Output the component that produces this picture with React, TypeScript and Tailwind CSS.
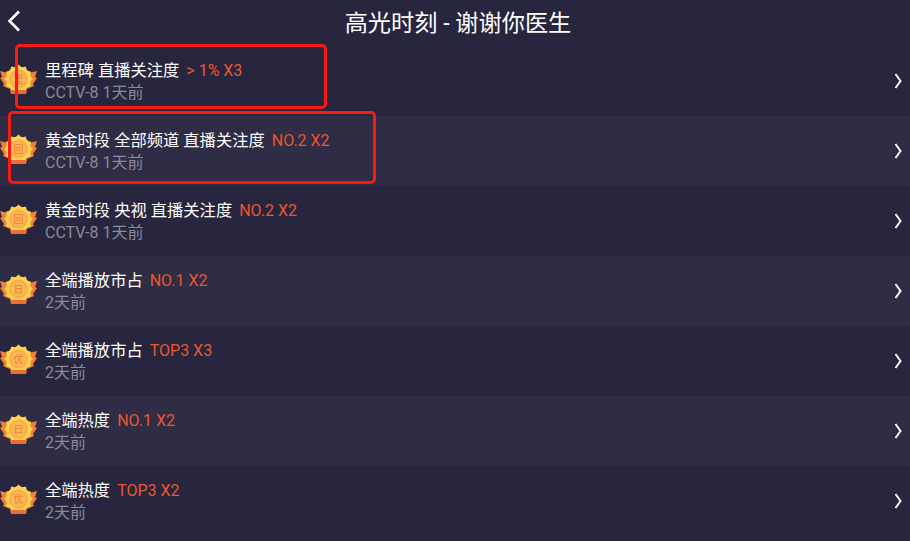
type Item = { title: string; tag: string; sub: string; glyph: string };

const items: Item[] = [
  { title: "里程碑 直播关注度", tag: "> 1% X3", sub: "CCTV-8 1天前", glyph: "里" },
  { title: "黄金时段 全部频道 直播关注度", tag: "NO.2 X2", sub: "CCTV-8 1天前", glyph: "回" },
  { title: "黄金时段 央视 直播关注度", tag: "NO.2 X2", sub: "CCTV-8 1天前", glyph: "回" },
  { title: "全端播放市占", tag: "NO.1 X2", sub: "2天前", glyph: "日" },
  { title: "全端播放市占", tag: "TOP3 X3", sub: "2天前", glyph: "优" },
  { title: "全端热度", tag: "NO.1 X2", sub: "2天前", glyph: "日" },
  { title: "全端热度", tag: "TOP3 X2", sub: "2天前", glyph: "优" },
];

const font = "font-['Roboto','Noto_Sans_CJK_SC',sans-serif]";

// star-like gold badge with orange wings and a ribbon
function Medal({ glyph }: { glyph: string }) {
  const spikes = Array.from({ length: 12 }, (_, i) => (i * 360) / 12);
  return (
    <svg width="40" height="34" viewBox="0 0 40 34" className="shrink-0">
      <path d="M8 9 L0 7 L2 13 L0 14 L4 20 L3 22 L10 25 Z" fill="#f47f3c" />
      <path d="M29 9 L37 7 L35 13 L37 14 L33 20 L34 22 L27 25 Z" fill="#f47f3c" />
      <circle cx="18.5" cy="15" r="12.5" fill="#ffd24f" />
      {spikes.map((a) => (
        <path key={a} d="M15.5 3.5 L18.5 0.5 L21.5 3.5 Z" fill="#ffd24f" transform={`rotate(${a} 18.5 15)`} />
      ))}
      <circle cx="18.5" cy="15" r="9.5" fill="#fbac4a" />
      <circle cx="18.5" cy="15" r="7.5" fill="#fcb856" />
      <text x="18.5" y="19" textAnchor="middle" fontSize="10" fill="#ee7f35" fontFamily="Noto Sans CJK SC, sans-serif">
        {glyph}
      </text>
      <path d="M10 26 H27 L26 30 H11 Z" fill="#ee6d34" />
    </svg>
  );
}

function Row({ item, odd }: { item: Item; odd: boolean }) {
  return (
    <div className={`flex h-[70px] items-center ${odd ? "bg-[#2f2c45]" : "bg-[#28263f]"}`}>
      <div className="flex w-[45px] shrink-0">
        <Medal glyph={item.glyph} />
      </div>
      <div className="min-w-0 flex-1">
        <div className="flex h-[21px] items-center whitespace-pre text-[16.3px] leading-[21px] text-white">
          {item.title}
          <span className="ml-[7px] text-[16px] text-[#e8572f]">{item.tag}</span>
        </div>
        <div className="mt-[1px] h-[21px] text-[16px] leading-[21px] text-[#8a8a99]">{item.sub}</div>
      </div>
      <svg width="8" height="16" viewBox="0 0 8 16" className="mr-[8px] shrink-0">
        <path d="M1.5 1 L6.5 8 L1.5 15" fill="none" stroke="#fff" strokeWidth="2" />
      </svg>
    </div>
  );
}

export default function App() {
  return (
    <div className={`relative h-[541px] w-[910px] overflow-hidden bg-[#28263f] ${font}`}>
      <header className="relative flex h-[46px] items-center justify-center pl-[6px]">
        <svg width="14" height="22" viewBox="0 0 14 22" className="absolute left-[7px] top-[10px]">
          <path d="M12 1.5 L2.5 11 L12 20.5" fill="none" stroke="#fff" strokeWidth="2.6" />
        </svg>
        <h1 className="text-[23.2px] font-normal text-white">高光时刻 - 谢谢你医生</h1>
      </header>
      <div>
        {items.map((item, i) => (
          <Row key={i} item={item} odd={i % 2 === 1} />
        ))}
      </div>
      {/* annotations drawn on top of the screenshot */}
      <div className="absolute left-[15px] top-[44px] h-[65px] w-[312px] rounded-[5px] border-[3px] border-[#fb1a12]" />
      <div className="absolute left-[8px] top-[111px] h-[73px] w-[368px] rounded-[5px] border-[3px] border-[#fb1a12]" />
    </div>
  );
}
